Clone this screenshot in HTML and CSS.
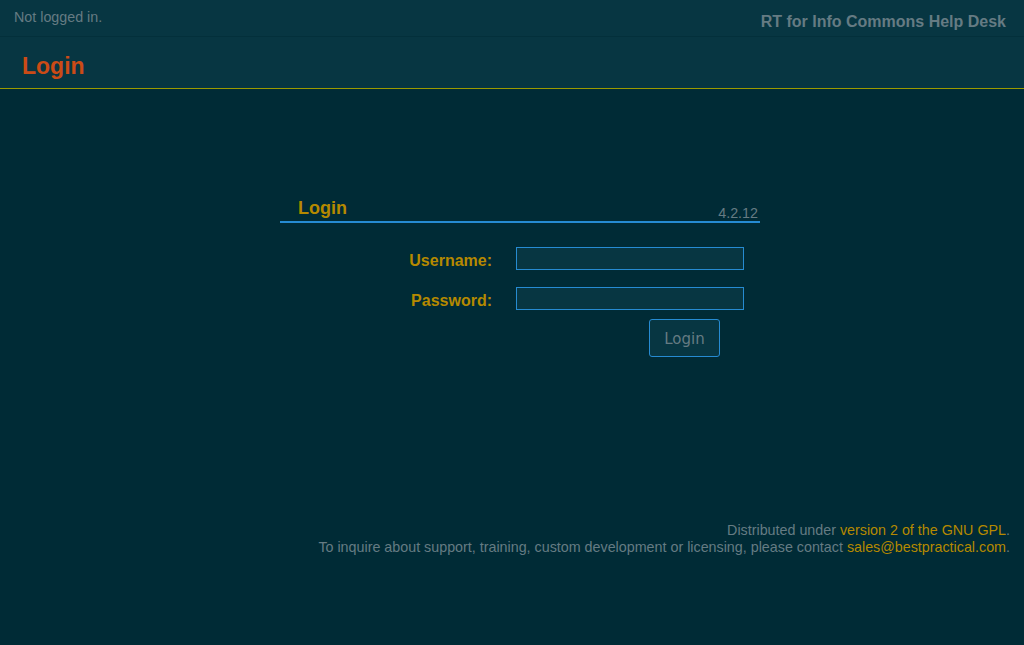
FILE: index.html
```html
<!DOCTYPE html>
<html lang="en">
<head>
  <meta charset="UTF-8" />
  <title>Login</title>
  <link rel="stylesheet" href="styles.css">
</head>
<body>

  <!-- === TOP BAR === -->
  <div id="quick-bar">
    <span class="session">Not logged in.</span>
    <span class="rtname">RT for Info Commons Help Desk</span>
  </div>

  <!-- === PAGE HEADER === -->
  <div id="header">
    <h1>Login</h1>
  </div>

  <!-- === LOGIN BOX === -->
  <div id="body">
    <div class="login-box">
      <div class="titlebox-title">
        <span class="left">Login</span>
        <span class="right">4.2.12</span>
      </div>
      <form class="login-form" onsubmit="return false;">
        <div class="input-row">
          <label for="user">Username:</label>
          <input type="text" id="user" name="user">
        </div>
        <div class="input-row">
          <label for="pass">Password:</label>
          <input type="password" id="pass" name="pass">
        </div>
        <div class="button-row">
          <button type="submit">Login</button>
        </div>
      </form>
    </div>
  </div>

  <!-- === FOOTER === -->
  <div id="footer">
    <p>Distributed under <a href="#">version 2 of the GNU GPL</a>.</p>
    <p>To inquire about support, training, custom development or licensing, please contact <a href="#">sales@bestpractical.com</a>.</p>
  </div>

</body>
</html>
```

FILE: styles.css
```css
* {
  margin: 0;
  padding: 0;
  box-sizing: border-box;
}

body {
  font-family: "Liberation Sans", Arial, sans-serif;
  background: #002b36;
  color: #657b83;
  height: 100vh;
  overflow: hidden;
}

a {
  color: #b58900;
  text-decoration: none;
}

/* === TOP BAR === */
#quick-bar {
  height: 37px;
  background: #073642;
  border-bottom: 1px solid #03303b;
  display: flex;
  justify-content: space-between;
  align-items: center;
  padding: 0 18px 0 14px;
}

.session {
  font-size: 14.3px;
  margin-top: -2px;
}

.rtname {
  font-size: 16px;
  font-weight: bold;
  margin-top: 7px;
}

/* === PAGE HEADER === */
#header {
  height: 52px;
  background: #073642;
  border-bottom: 1px solid #9a9a00;
  padding: 16px 22px 0;
}

#header h1 {
  font-size: 23px;
  color: #cb4b16;
  font-weight: bold;
}

/* === LOGIN BOX === */
#body {
  display: flex;
  justify-content: center;
  padding: 107px 0 0 16px;
}

.login-box {
  width: 480px;
}

.titlebox-title {
  display: flex;
  justify-content: space-between;
  align-items: flex-end;
  border-bottom: 2px solid #268bd2;
  padding: 0 2px 0 18px;
  height: 27px;
}

.titlebox-title .left {
  font-size: 18px;
  font-weight: bold;
  color: #b58900;
  line-height: 22px;
  margin-bottom: 2px;
}

.titlebox-title .right {
  font-size: 14.3px;
  line-height: 15px;
}

.login-form {
  padding-top: 24px;
}

.input-row {
  display: flex;
  align-items: center;
  height: 23px;
  margin-bottom: 17px;
}

.input-row label {
  width: 212px;
  text-align: right;
  font-size: 16px;
  font-weight: bold;
  color: #b58900;
  padding-top: 5px;
}

.input-row input {
  margin-left: 24px;
  width: 228px;
  height: 23px;
  background: #073642;
  border: 1px solid #268bd2;
  color: #93a1a1;
}

.button-row {
  margin-top: -8px;
  padding-left: 369px;
}

.button-row button {
  width: 71px;
  height: 38px;
  padding-top: 2px;
  background: #073642;
  border: 1px solid #268bd2;
  border-radius: 3px;
  color: #657b83;
  font-family: "DejaVu Sans", sans-serif;
  font-size: 15px;
  cursor: pointer;
}

/* === FOOTER === */
#footer {
  margin-top: 165px;
  padding-right: 14px;
  text-align: right;
  font-size: 14.3px;
  line-height: 17px;
}
```
